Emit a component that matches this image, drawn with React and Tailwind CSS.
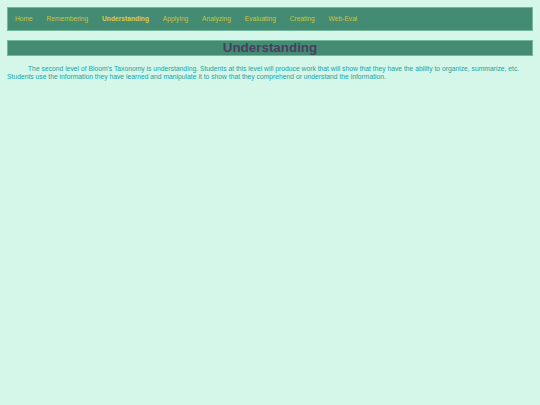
const links = [
  { label: 'Home' },
  { label: 'Remembering' },
  { label: 'Understanding', active: true },
  { label: 'Applying' },
  { label: 'Analyzing' },
  { label: 'Evaluating' },
  { label: 'Creating' },
  { label: 'Web-Eval' },
]

export default function App() {
  return (
    <div className="min-h-[405px] bg-[#d4f7ea] px-[7px] pt-[7px] font-['Liberation_Sans',Arial,sans-serif]">
      <nav className="flex h-[24px] items-center border border-[#74b79c] bg-[#438b73]">
        {links.map(l => (
          <a
            key={l.label}
            href="#"
            className={`px-[6.9px] text-[6.67px] leading-none ${l.active ? 'font-bold text-[#d8d23a]' : 'text-[#c9c63f]'}`}
          >
            {l.label}
          </a>
        ))}
      </nav>

      <h1 className="mt-[9px] h-[16px] border border-[#74b79c] bg-[#438b73] text-center text-[13.4px] font-bold leading-[14px] text-[#4b3d5f]">
        Understanding
      </h1>

      <p className="mt-[9px] indent-[21px] text-[6.75px] leading-[8px] text-[#1ba3a3]">
        The second level of Bloom's Taxonomy is understanding. Students at this level will produce work that will show that they have the ability to organize, summarize, etc. Students use the information they have learned and manipulate it to show that they comprehend or understand the information.
      </p>
    </div>
  )
}
